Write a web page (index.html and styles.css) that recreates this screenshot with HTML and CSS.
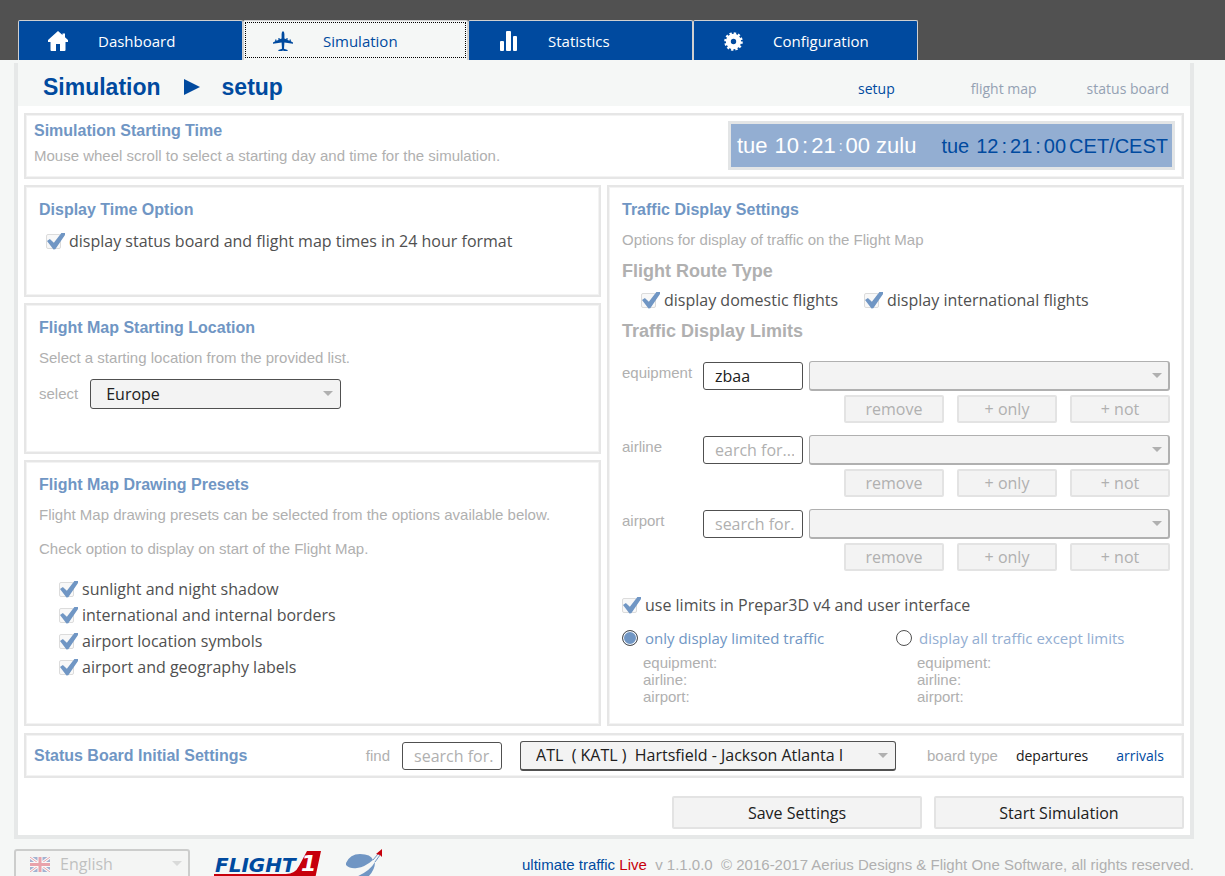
FILE: index.html
```html
<!DOCTYPE html>
<html lang="en">
<head>
    <meta charset="UTF-8">
    <meta name="viewport" content="width=device-width, initial-scale=1.0">
    <title>ultimate traffic Live</title>
    <link rel="stylesheet" href="styles.css">
</head>
<body>
    <nav class="topbar">
        <button type="button" class="tab">
            <svg class="tab-icon" viewBox="0 0 20 20"><path fill="currentColor" d="M10 0L0 9v2h2.500v8q0 1 1 1H8v-7h4v7h4.500q1 0 1-1v-8H20V9l-3-2.700V2.500h-2.500v1.600z"/></svg>
            <span>Dashboard</span>
        </button>
        <button type="button" class="tab active">
            <svg class="tab-icon" viewBox="0 0 20 20"><path fill="currentColor" d="M10 0q1.400 1 1.400 3v4.500l2 .8V7h1.200v1.900l2 .8V8.500h1.200v1.700l2.200 1.200v1.300l-8.600-1.200-.4 6.300 3.600 1.200V20h-3.900L10 19.300 9.300 20H5.400v-1L9 17.800l-.4-6.300L0 12.700v-1.300l2.200-1.200V8.500h1.200v1.200l2-.8V7h1.200v1.300l2-.8V3q0-2 1.400-3z"/></svg>
            <span>Simulation</span>
        </button>
        <button type="button" class="tab">
            <svg class="tab-icon" viewBox="0 0 20 20"><g fill="currentColor"><rect x="2" y="10" width="4" height="10" rx="1"/><rect x="8" y="0" width="5" height="20" rx="1"/><rect x="15" y="5" width="4" height="15" rx="1"/></g></svg>
            <span>Statistics</span>
        </button>
        <button type="button" class="tab">
            <svg class="tab-icon" viewBox="0 0 20 20"><circle cx="10.500" cy="10.500" r="5.200" fill="none" stroke="currentColor" stroke-width="5"/><circle cx="10.500" cy="10.500" r="8" fill="none" stroke="currentColor" stroke-width="2.600" stroke-dasharray="2.300 1.890"/></svg>
            <span>Configuration</span>
        </button>
    </nav>

    <main class="panel">
        <header class="page-head">
            <h1>Simulation</h1>
            <svg class="crumb-arrow" viewBox="0 0 16 16"><path fill="currentColor" d="M0 0l16 8-16 8z"/></svg>
            <h1>setup</h1>
            <div class="page-links">
                <a href="#setup" class="current">setup</a>
                <a href="#map">flight map</a>
                <a href="#board">status board</a>
            </div>
        </header>

        <div class="content">
            <section class="card start-time">
                <div>
                    <h2>Simulation Starting Time</h2>
                    <p>Mouse wheel scroll to select a starting day and time for the simulation.</p>
                </div>
                <div class="clock">
                    <div class="zulu"><span class="day">tue</span><span>10</span><span>:</span><span>21</span><span class="thin">:</span><span>00</span><span class="zone">zulu</span></div>
                    <div class="local"><span class="day">tue</span><span>12</span><span>:</span><span>21</span><span>:</span><span>00</span><span>CET/CEST</span></div>
                </div>
            </section>

            <div class="columns">
                <div class="left">
                    <section class="card time-option">
                        <h2>Display Time Option</h2>
                        <label class="check"><input type="checkbox" checked>display status board and flight map times in 24 hour format</label>
                    </section>

                    <section class="card location">
                        <h2>Flight Map Starting Location</h2>
                        <p>Select a starting location from the provided list.</p>
                        <div class="select-row">
                            <label for="location">select</label>
                            <div class="select">
                                <select id="location"><option>Europe</option></select>
                            </div>
                        </div>
                    </section>

                    <section class="card presets">
                        <h2>Flight Map Drawing Presets</h2>
                        <p>Flight Map drawing presets can be selected from the options available below.</p>
                        <p class="hint">Check option to display on start of the Flight Map.</p>
                        <div class="check-list">
                            <label class="check"><input type="checkbox" checked>sunlight and night shadow</label>
                            <label class="check"><input type="checkbox" checked>international and internal borders</label>
                            <label class="check"><input type="checkbox" checked>airport location symbols</label>
                            <label class="check"><input type="checkbox" checked>airport and geography labels</label>
                        </div>
                    </section>
                </div>

                <section class="card traffic">
                    <h2>Traffic Display Settings</h2>
                    <p>Options for display of traffic on the Flight Map</p>
                    <h3>Flight Route Type</h3>
                    <div class="route-types">
                        <label class="check"><input type="checkbox" checked>display domestic flights</label>
                        <label class="check"><input type="checkbox" checked>display international flights</label>
                    </div>
                    <h3 class="limits-title">Traffic Display Limits</h3>

                    <div class="limit">
                        <label for="equipment">equipment</label>
                        <input type="text" id="equipment" value="zbaa">
                        <div class="select disabled">
                            <select aria-label="equipment limits"><option></option></select>
                        </div>
                        <div class="limit-buttons">
                            <button type="button" disabled>remove</button>
                            <button type="button" disabled>+ only</button>
                            <button type="button" disabled>+ not</button>
                        </div>
                    </div>
                    <div class="limit">
                        <label for="airline">airline</label>
                        <input type="text" id="airline" placeholder="earch for...">
                        <div class="select disabled">
                            <select aria-label="airline limits"><option></option></select>
                        </div>
                        <div class="limit-buttons">
                            <button type="button" disabled>remove</button>
                            <button type="button" disabled>+ only</button>
                            <button type="button" disabled>+ not</button>
                        </div>
                    </div>
                    <div class="limit">
                        <label for="airport">airport</label>
                        <input type="text" id="airport" placeholder="search for...">
                        <div class="select disabled">
                            <select aria-label="airport limits"><option></option></select>
                        </div>
                        <div class="limit-buttons">
                            <button type="button" disabled>remove</button>
                            <button type="button" disabled>+ only</button>
                            <button type="button" disabled>+ not</button>
                        </div>
                    </div>

                    <label class="check use-limits"><input type="checkbox" checked>use limits in Prepar3D v4 and user interface</label>
                    <div class="modes">
                        <div>
                            <label class="radio"><input type="radio" name="mode" checked>only display limited traffic</label>
                            <ul>
                                <li>equipment:</li>
                                <li>airline:</li>
                                <li>airport:</li>
                            </ul>
                        </div>
                        <div>
                            <label class="radio"><input type="radio" name="mode">display all traffic except limits</label>
                            <ul>
                                <li>equipment:</li>
                                <li>airline:</li>
                                <li>airport:</li>
                            </ul>
                        </div>
                    </div>
                </section>
            </div>

            <section class="card board">
                <h2>Status Board Initial Settings</h2>
                <label for="find">find</label>
                <input type="text" id="find" placeholder="search for...">
                <div class="select strong">
                    <select aria-label="airport"><option>ATL&nbsp; ( KATL )&nbsp; Hartsfield - Jackson Atlanta I</option></select>
                </div>
                <span class="board-label">board type</span>
                <a href="#departures" class="departures">departures</a>
                <a href="#arrivals">arrivals</a>
            </section>

            <div class="actions">
                <button type="button">Save Settings</button>
                <button type="button">Start Simulation</button>
            </div>
        </div>
    </main>

    <footer class="footer">
        <div class="select language">
            <svg class="flag" viewBox="0 0 20 15">
                <path fill="#2b4c9b" d="M0 0h20v15H0z"/>
                <path stroke="#fff" stroke-width="3" d="M0 0l20 15M20 0L0 15"/>
                <path stroke="#d8283c" d="M0 0l20 15M20 0L0 15"/>
                <path stroke="#fff" stroke-width="5" d="M10 0v15M0 7.500h20"/>
                <path stroke="#d8283c" stroke-width="3" d="M10 0v15M0 7.500h20"/>
            </svg>
            <select aria-label="language"><option>English</option></select>
        </div>
        <svg class="flight1" viewBox="0 0 110 30">
            <path fill="#c7000b" d="M93 2h14l-6 28H0v-5h72q9 0 13-8z"/>
            <text class="logo-name" x="1" y="23">FLIGHT</text>
            <text class="logo-one" x="87" y="22">1</text>
        </svg>
        <svg class="rocket" viewBox="0 0 38 30">
            <path fill="#7096c4" d="M0 14Q4 5 14 5q11 0 13 6-8 7-16 8-7 1-11-3z"/>
            <path fill="#7096c4" d="M29 13q0 8-7 15H10q14-6 19-15z"/>
            <path fill="none" stroke="#7096c4" d="M27 11l5-6M29 13l5-7"/>
            <path fill="#c7000b" d="M36 0v8l-2-2-4-1z"/>
        </svg>
        <div class="copyright"><span class="brand">ultimate traffic</span> <span class="live">Live</span>&nbsp; v 1.1.0.0&nbsp; © 2016-2017 Aerius Designs &amp; Flight One Software, all rights reserved.</div>
    </footer>
</body>
</html>
```
FILE: styles.css
```css
* {
    box-sizing: border-box;
}
body {
    margin: 0;
    height: 100vh;
    overflow: hidden;
    background: #f5f7f6;
    color: #b0b0b0;
    font: 15px/20px "Liberation Sans", Arial, sans-serif;
}
h1, h2, h3, p, ul {
    margin: 0;
}
button, input, select {
    font: 16px/20px "Open Sans", sans-serif;
    margin: 0;
}
a {
    text-decoration: none;
}

/* tabs */
.topbar {
    display: flex;
    padding: 20px 18px 0;
    background: #515151;
}
.tab {
    display: flex;
    align-items: center;
    gap: 30px;
    width: 225px;
    height: 40px;
    padding: 0 0 0 29px;
    border: 1px solid #d0d0d0;
    border-bottom: 0;
    border-radius: 2px 2px 0 0;
    background: #004a9f;
    color: #fff;
    font-size: 15px;
}
.tab.active {
    background: #f5f7f6;
    color: #004a9f;
    outline: 1px dotted #000;
    outline-offset: -3px;
}
.tab-icon {
    width: 20px;
    height: 20px;
}

/* page frame */
.panel {
    margin: 3px 31px 0 14px;
    border: 4px solid #e6e8e8;
    border-top: 0;
    background: #fff;
}
.page-head {
    display: flex;
    align-items: center;
    height: 43px;
    padding: 5px 21px 0 25px;
    background: #f5f7f6;
    color: #004a9f;
}
h1 {
    font-size: 23px;
    line-height: 28px;
}
.crumb-arrow {
    width: 16px;
    height: 16px;
    margin: 0 22px 0 23px;
}
.page-links {
    display: flex;
    margin-left: auto;
    padding-top: 3px;
    font: 500 14px/22px "Open Sans", sans-serif;
}
.page-links a {
    margin-left: 50px;
    color: #94a1b3;
}
.page-links a.current {
    color: #004a9f;
    margin-right: 26px;
}
.content {
    display: flex;
    flex-direction: column;
    gap: 6px;
    padding: 7px 6px 6px;
}
.card {
    border: 2px solid #e6e6e6;
    box-shadow: inset 0 0 0 1px #f3f3f3;
    padding: 13px 12px 12px 13px;
}
h2 {
    color: #7096c4;
    font-size: 16px;
    line-height: 20px;
}
h3 {
    font-size: 18px;
    line-height: 22px;
}
.card p {
    margin-top: 10px;
}

/* starting time */
.start-time {
    display: flex;
    justify-content: space-between;
    height: 66px;
    padding: 6px 7px 6px 8px;
}
.start-time p {
    margin-top: 5px;
}
.clock {
    display: flex;
    align-items: center;
    justify-content: space-between;
    width: 447px;
    height: 49px;
    padding: 0 4px 0 6px;
    border: 3px solid #e3e5e6;
    background: #93aed2;
}
.zulu, .local {
    display: flex;
    align-items: center;
    gap: 3px;
}
.zulu {
    color: #fff;
    font-size: 22px;
}
.local {
    color: #004a9f;
    font-size: 20px;
}
.clock .day {
    margin-right: 4px;
}
.clock .zone {
    margin-left: 3px;
}
.thin {
    font-size: 14px;
}

/* cards */
.columns {
    display: grid;
    grid-template-columns: 1fr 1fr;
    gap: 6px;
}
.left {
    display: flex;
    flex-direction: column;
    gap: 6px;
}
.time-option {
    min-height: 112px;
}
.location {
    min-height: 151px;
}
.presets {
    flex: 1;
}
.check, .radio {
    display: flex;
    align-items: center;
    gap: 8px;
    color: #505050;
    font: 16px/20px "Open Sans", sans-serif;
}
.check input {
    appearance: none;
    position: relative;
    width: 15px;
    height: 15px;
    border: 1px solid #dcdcdc;
    border-radius: 2px;
    background: #f8f8f8;
}
.check input:checked::after {
    content: "";
    position: absolute;
    left: 0;
    top: -2px;
    width: 18px;
    height: 17px;
    background: #7096c4;
    clip-path: polygon(0 50%, 16% 38%, 38% 60%, 82% 0, 100% 0, 100% 14%, 46% 98%, 36% 100%);
}
.time-option .check {
    margin: 11px 0 0 7px;
}
.select-row {
    display: flex;
    align-items: center;
    gap: 12px;
    margin-top: 11px;
}
.select-row .select {
    width: 251px;
}
.select {
    position: relative;
}
.select::after {
    content: "";
    position: absolute;
    right: 8px;
    top: 12px;
    border: 5px solid transparent;
    border-top-color: #b0b0b0;
    border-bottom: 0;
}
select {
    appearance: none;
    display: block;
    width: 100%;
    height: 30px;
    padding: 0 24px 0 15px;
    border: 1px solid #505050;
    border-radius: 3px;
    background: #f3f3f3;
    color: #202020;
}
.disabled select {
    border-color: #b0b0b0;
    border-right-width: 2px;
    border-bottom-width: 2px;
}
.strong select {
    border-bottom-width: 2px;
}
.presets .hint {
    margin-top: 14px;
}
.check-list {
    display: grid;
    gap: 6px;
    padding: 20px;
}

/* traffic */
.traffic {
    padding-bottom: 19px;
}
.traffic h3 {
    margin-top: 10px;
}
.route-types {
    display: flex;
    gap: 26px;
    margin: 8px 0 0 19px;
}
.traffic .limits-title {
    margin-bottom: 19px;
}
.limit {
    display: grid;
    grid-template-columns: 75px 100px 1fr;
    gap: 4px 6px;
    align-items: center;
    margin-bottom: 12px;
}
input[type="text"] {
    width: 100px;
    height: 28px;
    padding: 0 8px 0 11px;
    border: 1px solid #505050;
    border-radius: 3px;
    background: #fff;
    color: #202020;
}
input::placeholder {
    color: #b0b0b0;
    opacity: 1;
}
.limit > label {
    padding-bottom: 6px;
}
.limit-buttons {
    grid-column: 1 / 4;
    display: flex;
    justify-content: flex-end;
    gap: 13px;
}
.limit-buttons button {
    width: 100px;
    height: 28px;
    padding: 0;
    border: 2px solid #e3e3e3;
    border-radius: 2px;
    background: #f3f3f3;
    color: #b0b0b0;
}
.use-limits {
    margin-top: 24px;
}
.modes {
    display: grid;
    grid-template-columns: 1fr 1fr;
    margin-top: 13px;
}
.radio {
    gap: 7px;
    color: #93aed2;
    font-size: 15px;
}
.radio input {
    appearance: none;
    width: 16px;
    height: 16px;
    border: 1px solid #505050;
    border-radius: 50%;
}
.radio input:checked {
    background: #7096c4;
    box-shadow: inset 0 0 0 1px #fff;
}
.radio:has(:checked) {
    color: #7096c4;
}
.modes ul {
    padding: 6px 0 0 21px;
    list-style: none;
    line-height: 17px;
}

/* status board */
.board {
    display: flex;
    align-items: center;
    height: 45px;
    margin-top: 1px;
    padding: 0 18px 0 8px;
}
.board label {
    margin: 0 12px 0 auto;
}
.board .select {
    width: 376px;
    margin-left: 18px;
}
.board-label {
    margin-left: 31px;
}
.board a {
    margin-left: 28px;
    color: #004a9f;
    font: 500 14px/20px "Open Sans", sans-serif;
}
.board .departures {
    margin-left: 18px;
    color: #202020;
}
.actions {
    display: flex;
    justify-content: flex-end;
    gap: 12px;
    margin-top: 12px;
}
.actions button {
    width: 250px;
    height: 33px;
    border: 2px solid #e3e3e3;
    border-radius: 2px;
    background: #f3f3f3;
    color: #202020;
}

/* footer */
.footer {
    display: flex;
    padding: 10px 31px 0 14px;
}
.language {
    width: 176px;
    margin-right: 24px;
    opacity: .4;
}
.language select {
    padding-left: 44px;
    border: 2px solid #909090;
    color: #707070;
}
.flag {
    position: absolute;
    left: 16px;
    top: 8px;
    width: 20px;
    height: 15px;
}
.flight1 {
    width: 110px;
    height: 30px;
}
.logo-name {
    fill: #004a9f;
    font: italic bold 20px "DejaVu Sans", sans-serif;
}
.logo-one {
    fill: #fff;
    font: italic bold 22px "DejaVu Sans", sans-serif;
}
.rocket {
    width: 38px;
    height: 30px;
    margin-left: 22px;
}
.copyright {
    margin: 6px 0 0 auto;
}
.brand {
    color: #004a9f;
}
.live {
    color: #c7000b;
}
```
